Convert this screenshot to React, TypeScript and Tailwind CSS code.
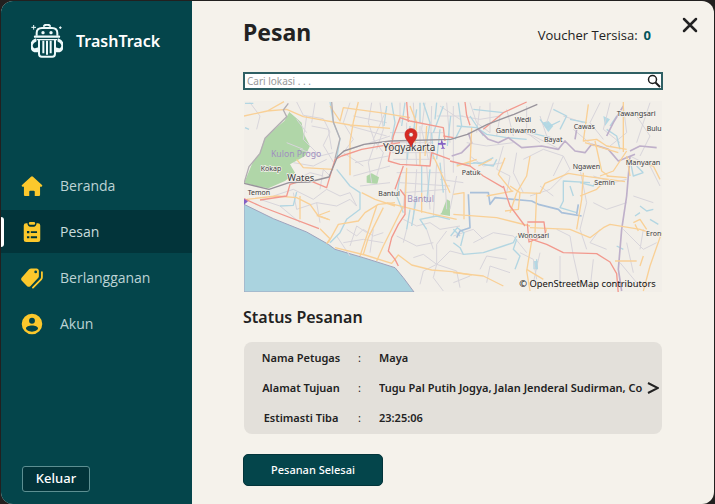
import React, { useState } from 'react';

const navItems = [
    { id: 'beranda', label: 'Beranda' },
    { id: 'pesan', label: 'Pesan' },
    { id: 'berlangganan', label: 'Berlangganan' },
    { id: 'akun', label: 'Akun' },
];

const orderRows = [
    { label: 'Nama Petugas', value: 'Maya' },
    { label: 'Alamat Tujuan', value: 'Tugu Pal Putih Jogya, Jalan Jenderal Sudirman, Co', more: true },
    { label: 'Estimasti Tiba', value: '23:25:06' },
];

const NavIcon: React.FC<{ id: string }> = ({ id }) => (
    <svg viewBox="0 0 24 24" className="w-[22px] h-[22px] shrink-0 fill-[#fcc82c]" aria-hidden="true">
        {id === 'beranda' && (
            <path d="M12 1.500a1.600 1.600 0 0 1 1.100.4l9.800 9.100c.7.700.3 1.800-.7 1.800h-1.400v8.700c0 .8-.6 1.400-1.400 1.400H15v-4.700a1.100 1.100 0 0 0-1.100-1.100h-3.800A1.100 1.100 0 0 0 9 18.200v4.700H4.600c-.8 0-1.400-.6-1.400-1.400v-8.700H1.800c-1 0-1.400-1.100-.7-1.800l9.800-9.100a1.600 1.600 0 0 1 1.100-.4z" />
        )}
        {id === 'pesan' && (
            <path
                fillRule="evenodd"
                d="M5.500 2.500H7c.2 2.400 1.400 3.700 3 3.700h4c1.600 0 2.800-1.300 3-3.700h1.500A2.500 2.500 0 0 1 21 5v15.500a2.500 2.500 0 0 1-2.500 2.500h-13A2.500 2.500 0 0 1 3 20.500V5a2.500 2.500 0 0 1 2.500-2.500zM10 1.200h4a1.500 1.500 0 0 1 0 3h-4a1.500 1.500 0 0 1 0-3zM6.500 11v2.400h2.600V11zm4.200.2v2h6.800v-2zM6.500 16.500v2.400h2.600v-2.400zm4.200.2v2h6.800v-2z"
            />
        )}
        {id === 'berlangganan' && (
            <>
                <path
                    fillRule="evenodd"
                    d="M11 1.500h6c1.400 0 2.500 1.100 2.500 2.500v6c0 .8-.3 1.500-.9 2.100l-8.400 8.800c-1 1-2.500 1-3.500 0L.9 15c-1-1-1-2.500 0-3.500L8.800 2.400c.6-.6 1.400-.9 2.200-.9zM16 3.900a1.500 1.500 0 1 0 0 3 1.500 1.500 0 0 0 0-3z"
                />
                <path
                    d="M22.800 5.500v5.700c0 .9-.3 1.700-.9 2.300L13 22.500"
                    className="fill-none stroke-[#fcc82c] stroke-2"
                    strokeLinecap="round"
                />
            </>
        )}
        {id === 'akun' && (
            <path
                fillRule="evenodd"
                d="M12 .8a11.200 11.200 0 1 0 0 22.400A11.200 11.200 0 0 0 12 .8zM12 5.200a3.200 3.200 0 1 1 0 6.400 3.200 3.200 0 0 1 0-6.400zM12 13.700c3.400 0 6.600 1.400 6.600 3 0 1.700-3.100 3.700-6.600 3.700s-6.600-2-6.600-3.700c0-1.600 3.200-3 6.600-3z"
            />
        )}
    </svg>
);

const Logo = () => (
    <svg viewBox="0 0 96 102" className="w-8 h-[34px] shrink-0 fill-none stroke-[#eefafa]" aria-hidden="true">
        <path d="M17 35v-8c0-10 7-15 16-15h30c9 0 16 5 16 15v8" strokeWidth="6" />
        <path d="M39 6c2-3 5-4 9-4s7 1 9 4" strokeWidth="6" strokeLinecap="round" />
        <path d="M12 38h72" strokeWidth="7" strokeLinecap="round" />
        <path d="M18 47h60" strokeWidth="4" />
        <path d="M24 47v42c0 6 3 9 8 9h32c5 0 8-3 8-9V47" strokeWidth="6" />
        <path d="M37 50v38M48 50v42M59 50v38" strokeWidth="6" />
        <path
            d="M14 51C2 56 0 67 6 73c4 4 8 3 14 0v9C9 84 2 79 1 70-1 59 4 50 14 46zM82 51c12 5 14 16 8 22-4 4-8 3-14 0v9c11 2 18-3 19-12 2-11-3-20-13-24z"
            strokeWidth="5"
            strokeLinejoin="round"
            className="fill-[#eefafa]"
        />
        <path d="M8 3v14M1 10h14M88 7v8M84 11h8" strokeWidth="3" />
        <circle cx="36" cy="26" r="5" className="fill-[#eefafa] stroke-none" />
        <circle cx="60" cy="26" r="5" className="fill-[#eefafa] stroke-none" />
    </svg>
);

const minorRoads = [
    'M30 20l30 40-10 40M170 18l20 40 60 10 20 40-20 40 30 50M200 60l-10 70 40 40M215 90l50 10 10 60M225 20l-10 60M170 70l30 40',
    'M330 20l-20 60 30 50-30 40 60 40M395 20l-10 60 20 60-20 60 10 60M420 20l10 80-20 60M440 40l-40 90 30 40-20 70',
    'M340 60l100 20M330 90l110 30M330 160l120-40M345 200l100-20M340 240l110-30M360 270l90-10',
    'M100 300l60-20 60 30 40-30 40 20 30-10 20 40M160 290l10 50 60-20 10 60M230 320l60 10 40-20 20 20M240 280l10-60 20 20',
    'M170 250l40-20 40 10M160 200l60 10 40-20M180 160l60 20 40-10M140 140l50 20M60 310l60 20 60 50',
    'M320 400l30 20 20-20 30 20 30-10M310 440l60-10 60 10M330 450l20-60 30 20M290 420l40 60M400 400l-10 70',
    'M480 20v60M500 80v130M520 20l10 190M540 90v110M555 20l-10 80 20 90M575 30l-5 170M450 110h160M450 140h130M455 170h120M460 190h110',
    'M470 230h140M480 260l150 10M490 290l130-10M500 220l-10 120M530 220l-10 150M560 210l10 130M590 200l-10 160M610 160l10 180',
    'M620 20l10 120M640 30v200M600 30l60 40M590 60h80M650 240l-20 100M600 250l70 10',
    'M490 370l40 20 40-10 30 20 60-10M500 400l-10 40M560 400l20 60M470 420l60 30 50-10',
    'M590 505l-40 20-10 40M590 505l40-40 40 10M590 505l60 20 10 50M590 505l-10 40 30 40M590 505l-40-30-30 10M590 505v-60l30-40',
    'M690 20l20 60 40 30M720 30l-10 80M750 20v90M780 60l-10 60M800 40l20 80M660 60l60 10 60-10M680 140l60 10 80-10',
    'M690 180l40 30 60-10M790 150l-20 70 40 20-10 50M830 170l-10 60 30 60M850 190l60-30 60 20 20 40-60 60-60 20M900 270l40 30',
    'M970 180l-30 60M1000 100l60 50M900 60l20 60 60 20M860 30v80l40 30M940 20l-20 60M970 60l60 20M820 100l60 20 80 40',
    'M1080 20l-30 60 40 50M1110 20l-20 80 50 40M1150 30l10 80-50 40M1190 60l40 60-30 60M1230 20l-40 120',
    'M1020 220l20 100-20 80 20 60M1060 240l60 20 40-10M1060 320l40 20 60-20M1080 400l-30 40 50 20M1170 180l60 30 30 60M1180 300l60 20',
    'M700 440l60-30 60 10 40 50M720 520l20-40 60 10M740 560l10-50 60 20M840 470l40 20 10 60M900 470l-20 90M950 400l40 20 10 60M960 480v80',
    'M1000 480l20 90M1060 490l-10 90M1150 400l60 60 40-20M1160 440l20 90M1210 400l-10 60M1140 500l50 60M640 560l50-20M640 420l60-20 30 30',
];

const waters = [
    'M270 18l10 60 20 50-10 60',
    'M290 220l40 50 30 20v50l-40 30-20 40-30 30',
    'M120 330l40-2 10-40M15 95l12 5M15 22h25',
    'M455 20l10 60-10 50M495 20l-10 70M530 40l-10 70M550 20l20 60-10 60M610 30l-30 80M600 100l-10 90M440 30l-8 60M590 20l-5 50M540 20v60M510 90l-8 100M575 110l5 80',
    'M480 240l-10 60 20 50M510 340l-10 60M600 200l10 90M545 210v80M530 300l-15 90M570 220l-10 100',
    'M560 400l-20-30 50-10 40 10M655 20l10 70-20 40M632 60l-10 90',
    'M640 440l20 15 10 20 60-5 60-20 30-10 10-20',
    'M632 420l20-25 20 15-10 40M640 400l20 20',
    'M650 90l60 5 30 20 60 10 60 5M700 40l90 10M690 60l40 60',
    'M900 70l20 25 40-20M940 40l40 20-20 40M870 110l60 15M990 70l50 10',
    'M1100 100l30 20 10 40M1110 90l20-30M1170 190l10 50 30-10M1190 210l20 20',
    'M650 205l80-5 30-15M700 200l60 10 10-20',
    'M1050 260l-80-5v60l-10 20 50 15M990 270l10 30',
    'M1200 330l20 15 20-5M1200 350l-15 10M830 430l-10 30 20 20-15 40M1130 450l20 10',
    'M890 490v30M1020 260l40 10 10-20M1230 370l25 15',
];

const yellowRoads = [
    'M12 60l70-15 50-28M80 45l60-5 50 22 140 25 120 10M270 30l30 45 10-40 110 15 90 15M355 18l-15 60-10 60v100',
    'M170 190l20 25 90 5M20 310l90-10 60 5 40 20 25 35 30 10M180 300v70M230 360l40-15M240 398l30 30-10 15M265 440l30-55 60-10 20-25 40-25 50-5',
    'M270 372l-30-12M410 330l-20 60-30 90M430 335l-45 90-15 50M285 455l90 22 80 25 20-25 40 30 60 15 60 5 60 10',
    'M365 290l40 20 60 20M440 320l120 30 90 20M490 330l-60 120-20 45M510 30l20 50-5 60M560 90l-5 90M540 150v60M500 215l-5 120M545 290v60M580 180l50 110',
    'M695 95l-5 115M710 190l-60 20M640 295l32-5v80M640 355l130 10 100 25M870 180l-10 60-30 50M810 270l30 20 60 2 15-30 70-30 60 10 110 15',
    'M840 290l-5 50-40 5M890 290l-5 120M795 185l-20 50 40 50M1045 25l-15 110 40-5 30 20 60 10M1065 135l20 90 20 15M1160 165l-40 60-40 15',
    'M1035 140l100 30M1150 18v150M1160 180l10 60M1160 190l80 20 20 40M1030 230l-5 80-15 90M1100 240l60 5M1020 300l50-20 30-30',
    'M870 395l120 5 60 25 40-30 20-10 90 15 60 20M875 435l-15 90 10 60M1265 410l-35 100-20 75M640 530l90 10 60 30M1180 380l20-10 20 30M1210 480l-10 30',
    'M740 300l80-15M715 210l40-20M830 290l-20 60M920 400l-10 30M860 520l50 30M1185 385l10 20M1190 495h-65',
];

const redRoads = [
    'M12 308l55 25 170 65M60 312l80-12 10-35 50-15 60 25 25-85 20-10 60-20 115-20',
    'M460 120l20-55 30 10 100 20 5 40M460 120l-15 75 35 10 90 5 5-40 55 20M500 18l5 60M675 18l5 40 10 30',
    'M490 210l-25 70M480 280l15 20v55l-20 30-20 40-10 40 20 25 10 20M730 100l60-50 70-32M630 195l60 15 40 30 60 35',
    'M790 270l20 60 45 60M862 378h50l5 40-50 20-5-55M860 425l60 20 50 25 100 3 40 25 20 35 5 60M610 120l30 5',
];

const boundaries = [
    'M715 100l30 30 30 10 30-15 40 30 60-5 50 10 20-25 30 30 30 5 20-25 20 5 30 10 30 35 50-20',
    'M1100 120l20-40 30-50M1170 180l-10 120-15 100-10 120 10 65M1170 165l30-15 50 5',
    'M1010 100l-5 30M685 110l10 30-30 30-30 10',
];

const rivers = ['M685 295l5 100-30 10-10 20M690 290h55l5 35 15-20 110 10 20 10 60 15 10 10 60 10', 'M1010 355l5-30'];

const places = [
    { name: 'Kokap', x: 62, y: 224, size: 21 },
    { name: 'Wates', x: 142, y: 256, size: 28 },
    { name: 'Temon', x: 23, y: 298, size: 21 },
    { name: 'Bantul', x: 415, y: 301, size: 21 },
    { name: 'Wedi', x: 824, y: 77, size: 21 },
    { name: 'Gantiwarno', x: 767, y: 111, size: 22 },
    { name: 'Bayat', x: 912, y: 138, size: 21 },
    { name: 'Cawas', x: 1001, y: 98, size: 21 },
    { name: 'Tawangsari', x: 1130, y: 61, size: 22 },
    { name: 'Bulu', x: 1220, y: 104, size: 21 },
    { name: 'Manyaran', x: 1157, y: 206, size: 22 },
    { name: 'Ngawen', x: 998, y: 219, size: 21 },
    { name: 'Semin', x: 1063, y: 267, size: 21 },
    { name: 'Patuk', x: 665, y: 237, size: 21 },
    { name: 'Wonosari', x: 834, y: 425, size: 21 },
    { name: 'Eron', x: 1218, y: 420, size: 21 },
];

const LocationMap = () => (
    <svg
        viewBox="12 15 1254 573"
        role="img"
        aria-label="Peta Yogyakarta"
        className="block w-full bg-[#f2efe9]"
    >
        <g fill="none" strokeLinejoin="round">
            <path
                d="M12 262l25-60 22-30 14-42 30-30 30-25 15-27 37 32 5 30 20 40-15 30-45 25 15 25-30 25-50 22zM380 240l15-8 22 12-5 20-32-4zM605 350l15-40 10 5v45l-30-5z"
                fill="#b0d6a8"
            />
            <path d="M12 325l88 43 100 40 65 37 20 15 85 25 95 30 25 30 32 43H12z" fill="#aad3df" stroke="#9fa3bd" strokeWidth="3" />
            <path d="M905 80l20-5 15 15-15 18zM880 495h14v25h-14zM1090 60l20 10-15 20z" fill="#b4d9e4" />
            {minorRoads.map((d) => (
                <path key={d} d={d} stroke="#d8d5db" strokeWidth="3" />
            ))}
            {waters.map((d) => (
                <path key={d} d={d} stroke="#b3d6e2" strokeWidth="4" />
            ))}
            {rivers.map((d) => (
                <path key={d} d={d} stroke="#a9c0da" strokeWidth="5" />
            ))}
            {boundaries.map((d) => (
                <path key={d} d={d} stroke="#bfb0ca" strokeWidth="5" />
            ))}
            {yellowRoads.map((d) => (
                <path key={d} d={d} stroke="#f9d096" strokeWidth="4" />
            ))}
            {redRoads.map((d) => (
                <path key={d} d={d} stroke="#f2998e" strokeWidth="4" />
            ))}
            <path d="M12 262l75 18 60-20 60-2 60-15 25-60 20-18 60-20 80-10 180-5 50-15 60-30 80-30 70-30" stroke="#98939b" strokeWidth="4" />
            <path d="M12 262l15-50 33-40 15-45 30-30 35-35-10-20 15-20M275 18l5 60 20 50-15 60" stroke="#b3aeb3" strokeWidth="4" />
        </g>
        <path d="M594 141h8l3-12 4 12h8v5h-8l2 8 5 4h-14l5-4-2-8h-11zM12 308l12 8-12 10z" fill="#8461c4" />
        <g fill="#a08fc0" fontSize="26">
            <text x="93" y="182">Kulon Progo</text>
            <text x="502" y="319">Bantul</text>
        </g>
        <g fill="#3a3a40" stroke="#f5f2ec" strokeWidth="4" paintOrder="stroke">
            {places.map((p) => (
                <text key={p.name} x={p.x} y={p.y} fontSize={p.size}>
                    {p.name}
                </text>
            ))}
            <text x="429" y="165" fontSize="30">Yogyakarta</text>
        </g>
        <path
            fillRule="evenodd"
            d="M513 98c-11 0-18 8-18 18 0 14 13 21 18 37 5-16 18-23 18-37 0-10-7-18-18-18zM513 109a7 7 0 1 1 0 14 7 7 0 0 1 0-14z"
            fill="#d62b24"
            stroke="#c3221e"
            strokeWidth="2"
        />
        <text x="838" y="573" fontSize="28" fill="#111111">© OpenStreetMap contributors</text>
    </svg>
);

export default function App() {
    const [active, setActive] = useState('pesan');
    const [query, setQuery] = useState('');

    return (
        <div className="min-h-screen flex bg-[#22201f] pt-px px-px font-['Noto_Sans','Open_Sans',sans-serif] text-[#222222]">
            <div className="flex flex-1 min-w-0 rounded-xl overflow-hidden bg-[#f5f2eb]">
                <aside className="w-[191px] shrink-0 flex flex-col bg-[#04454b] pt-[23px] pb-3">
                    <div className="flex items-center gap-[13px] pl-[30px]">
                        <Logo />
                        <span className="text-base font-semibold text-white">TrashTrack</span>
                    </div>
                    <nav className="mt-[106px] flex flex-col gap-[3px] font-['Open_Sans','Noto_Sans',sans-serif]">
                        {navItems.map((item) => (
                            <button
                                key={item.id}
                                onClick={() => setActive(item.id)}
                                className={`relative h-[43px] flex items-center gap-[17px] pl-5 text-left text-sm ${active === item.id
                                        ? 'bg-[#02343a] text-[#c9dcdd]'
                                        : 'text-[#bdd3d5]'
                                    }`}
                            >
                                {active === item.id && <span className="absolute left-0 top-[7px] h-[30px] w-[3px] rounded-r bg-white" />}
                                <NavIcon id={item.id} />
                                {item.label}
                            </button>
                        ))}
                    </nav>
                    <button className="mt-auto ml-[21px] w-[68px] h-[26px] rounded-[3px] border border-[#5d8f92] bg-[#02343a] text-[13px] font-medium text-white">
                        Keluar
                    </button>
                </aside>

                <main className="relative flex-1 min-w-0 pl-[51px] pr-[51px] pt-3 pb-[18px]">
                    <button aria-label="Tutup" className="absolute right-4 top-4">
                        <svg viewBox="0 0 16 16" className="w-4 h-4 fill-none stroke-[#222222]" strokeWidth="2.5" strokeLinecap="round">
                            <path d="M2 2l12 12M14 2L2 14" />
                        </svg>
                    </button>

                    <header className="flex items-center justify-between pr-3">
                        <h1 className="text-[23px] leading-[38px] font-bold">Pesan</h1>
                        <p className="mt-2 flex gap-[6px] text-[13px] font-medium font-['Open_Sans','Noto_Sans',sans-serif]">
                            Voucher Tersisa: <span className="font-bold text-[#04555b]">0</span>
                        </p>
                    </header>

                    <form
                        onSubmit={(e) => e.preventDefault()}
                        className="mt-[21px] h-[18px] flex items-center border-2 border-[#2f6064] bg-white"
                    >
                        <input
                            type="text"
                            aria-label="Cari lokasi"
                            placeholder="Cari lokasi . . ."
                            value={query}
                            onChange={(e) => setQuery(e.target.value)}
                            className="flex-1 min-w-0 h-full pl-[2px] text-[10px] outline-none placeholder:text-[#999999]"
                        />
                        <button aria-label="Cari">
                            <svg viewBox="0 0 14 14" className="w-[14px] h-[14px] fill-none stroke-[#1c1c1c]">
                                <circle cx="5.500" cy="5.500" r="4" strokeWidth="1.500" />
                                <path d="M8.500 8.500l4.500 4.500" strokeWidth="2" />
                            </svg>
                        </button>
                    </form>

                    <div className="mt-[11px] px-px">
                        <LocationMap />
                    </div>

                    <h2 className="mt-[13px] text-base leading-6 font-semibold">Status Pesanan</h2>

                    <dl className="mt-[13px] mx-px rounded-lg bg-[#e3e0da] py-px text-[11px] font-semibold">
                        {orderRows.map((row) => (
                            <div key={row.label} className="flex items-center h-[30px]">
                                <dt className="w-[114px] shrink-0 text-center">{row.label}</dt>
                                <span className="w-[21px] shrink-0 text-left font-normal">:</span>
                                <dd className="flex-1 min-w-0 overflow-hidden whitespace-nowrap">{row.value}</dd>
                                {row.more && (
                                    <button aria-label="Lihat alamat lengkap" className="mr-[3px]">
                                        <svg viewBox="0 0 12 12" className="w-3 h-3 fill-none stroke-[#222222]" strokeWidth="2">
                                            <path d="M1 1l10 5-10 5" />
                                        </svg>
                                    </button>
                                )}
                            </div>
                        ))}
                    </dl>

                    <button className="mt-5 w-[140px] h-8 rounded-[5px] border border-[#02343a] bg-[#04454b] text-[11px] font-medium text-white">
                        Pesanan Selesai
                    </button>
                </main>
            </div>
        </div>
    );
}
